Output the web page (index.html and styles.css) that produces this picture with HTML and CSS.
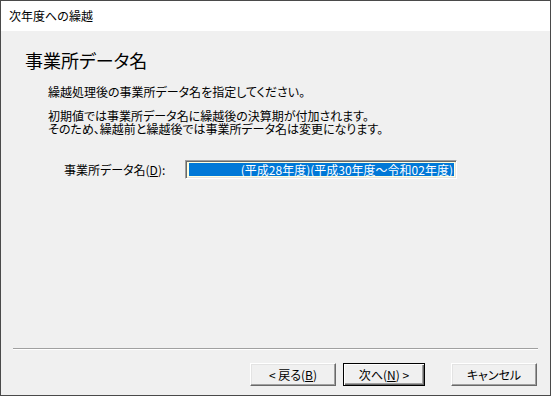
FILE: index.html
```html
<!DOCTYPE html>
<html lang="ja">
<head>
<meta charset="utf-8">
<title>次年度への繰越</title>
<link rel="stylesheet" href="styles.css">
</head>
<body>
<div class="window">
  <div class="titlebar">次年度への繰越</div>
  <div class="content">
    <h1 class="heading">事業所データ名</h1>
    <div class="desc">
      <p class="para">繰越処理後の事業所データ名を指定してください。</p>
      <p class="para second">初期値では事業所データ名に繰越後の決算期が付加されます。<br>そのため、繰越前と繰越後では事業所データ名は変更になります。</p>
    </div>
    <div class="field-row">
      <span class="label">事業所データ名(<u>D</u>):</span>
      <div class="field"><span class="sel">(平成28年度)(平成30年度～令和02年度)</span></div>
    </div>
    <div class="spacer"></div>
    <div class="separator"></div>
    <div class="buttons">
      <div class="btn b1">&lt; 戻る(<u>B</u>)</div>
      <div class="btn b2 default">次へ(<u>N</u>) &gt;</div>
      <div class="btn b3">キャンセル</div>
    </div>
  </div>
</div>
</body>
</html>
```

FILE: styles.css
```css
html, body {
  margin: 0;
  padding: 0;
  background: #f0f0f0;
}
body {
  font-family: "Noto Sans CJK JP", "Noto Sans", sans-serif;
  font-feature-settings: "palt";
  color: #000;
}
.window {
  width: 551px;
  height: 396px;
  box-sizing: border-box;
  border: 1px solid #4a4a4a;
  display: flex;
  flex-direction: column;
  overflow: hidden;
}
.titlebar {
  height: 30px;
  flex: none;
  background: #fff;
  padding-left: 8px;
  display: flex;
  align-items: center;
  font-size: 12px;
  line-height: 14px;
  color: #000;
  font-feature-settings: normal;
}
.content {
  flex: 1;
  background: #f0f0f0;
  display: flex;
  flex-direction: column;
  padding-top: 18px;
}
.heading {
  margin: 0 0 0 24px;
  font-size: 18px;
  line-height: 22px;
  font-weight: normal;
}
.desc {
  margin: 14px 0 0 47px;
  font-size: 12px;
  line-height: 13px;
}
.para {
  margin: 0;
}
.para.second {
  margin-top: 11px;
}
.field-row {
  display: flex;
  align-items: center;
  margin-top: 25px;
  padding-left: 63px;
  font-size: 12px;
}
.label {
  width: 121px;
  line-height: 14px;
}
.field {
  width: 272px;
  height: 19px;
  box-sizing: border-box;
  border-top: 1px solid #a0a0a0;
  border-left: 1px solid #a0a0a0;
  border-right: 1px solid #fff;
  border-bottom: 1px solid #fff;
  box-shadow: inset 1px 1px 0 #696969, inset -1px -1px 0 #e3e3e3;
  background: #ffffe1;
  padding: 2px 2px 2px 3px;
  display: flex;
}
.sel {
  flex: 1;
  background: #0078d7;
  color: #fff;
  text-align: right;
  font-size: 12px;
  line-height: 13px;
  padding-right: 1px;
  white-space: nowrap;
  font-feature-settings: normal;
}
.spacer {
  flex: 1;
}
.separator {
  margin: 0 12px 0 12px;
  border-top: 1px solid #a0a0a0;
  border-bottom: 1px solid #fff;
}
.buttons {
  display: flex;
  justify-content: flex-end;
  padding: 13px 13px 9px 0;
  font-size: 12px;
}
.btn {
  height: 23px;
  box-sizing: border-box;
  background: #f0f0f0;
  border-top: 1px solid #fff;
  border-left: 1px solid #fff;
  border-right: 1px solid #696969;
  border-bottom: 1px solid #696969;
  box-shadow: inset -1px -1px 0 #a0a0a0, inset 1px 1px 0 #e3e3e3;
  display: flex;
  align-items: center;
  justify-content: center;
  line-height: 14px;
}
.btn.b1 {
  width: 86px;
}
.btn.b2 {
  width: 82px;
  margin-left: 7px;
}
.btn.b3 {
  width: 86px;
  margin-left: 26px;
}
.btn.default {
  border: 1px solid #000;
  box-shadow: inset 1px 1px 0 #fff, inset -1px -1px 0 #696969, inset -2px -2px 0 #a0a0a0;
}
u {
  text-decoration: underline;
  text-underline-offset: 1px;
}
```
